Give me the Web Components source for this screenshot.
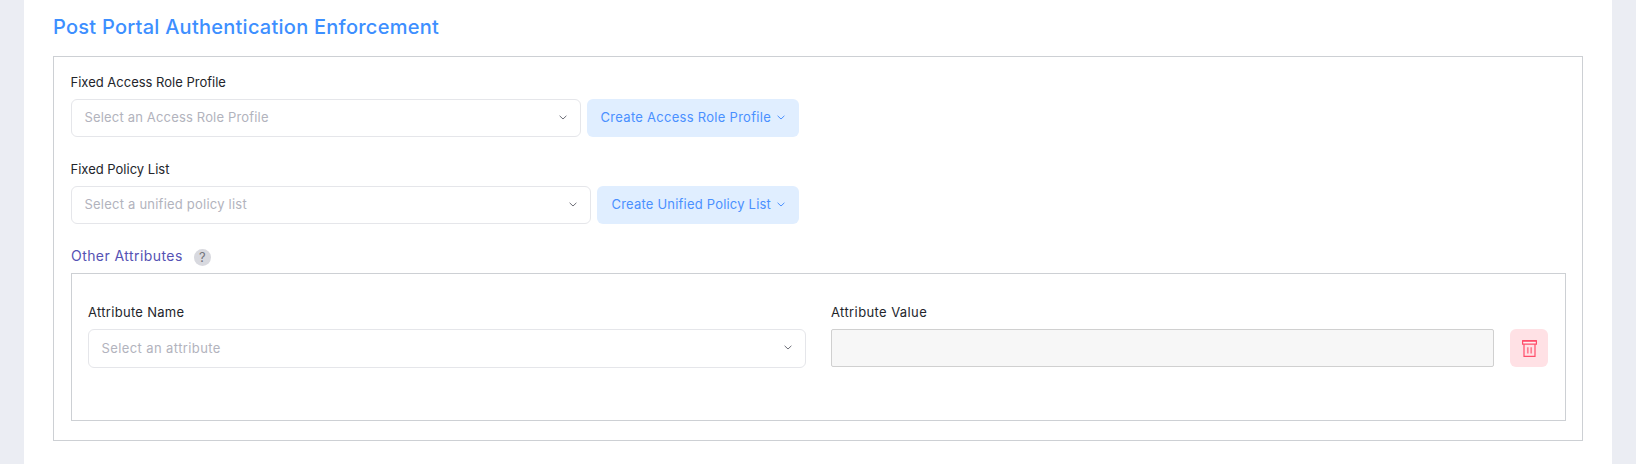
<!DOCTYPE html>
<html>
<head>
<meta charset="utf-8">
<title>Post Portal Authentication Enforcement</title>
<style>
  html, body { margin: 0; padding: 0; }
  body {
    height: 464px;
    overflow: hidden;
    background: #ebedf3;
    font-family: Inter, "Open Sans", sans-serif;
    font-size: 13px;
  }
</style>
</head>
<body>

<template id="chevron-tpl">
  <svg width="8" height="5" viewBox="0 0 8 5" fill="none"><path d="M.6.8 4 4 7.4.8" stroke="currentColor" stroke-width="1"/></svg>
</template>

<enforcement-card heading="Post Portal Authentication Enforcement">
  <select-group label="Fixed Access Role Profile" placeholder="Select an Access Role Profile" action="Create Access Role Profile" style="--ph-ls:.17px;--btn-ls:.28px;--btn-pad:13.5px"></select-group>
  <select-group label="Fixed Policy List" placeholder="Select a unified policy list" action="Create Unified Policy List" style="--ph-ls:.22px;--btn-ls:.2px;--btn-pad:14.5px"></select-group>
  <attributes-box heading="Other Attributes">
    <attribute-row></attribute-row>
  </attributes-box>
</enforcement-card>

<script>
const chevron = () => document.getElementById('chevron-tpl').innerHTML;

class EnforcementCard extends HTMLElement {
  constructor() {
    super();
    this.attachShadow({ mode: 'open' });
    this.shadowRoot.innerHTML = `
      <style>
        :host { display: block; margin: 0 24px; height: 464px; background: #fff; padding: 14px 29px 0; box-sizing: border-box; }
        h2 { margin: 0 0 15px 0; font-size: 20px; line-height: 27px; font-weight: 500; color: #3d8fff; letter-spacing: .25px; white-space: nowrap; }
        .box { border: 1px solid #cdd0d4; padding: 16px 16px 19px 17px; }
      </style>
      <h2>${this.getAttribute('heading')}</h2>
      <div class="box"><slot></slot></div>`;
  }
}

class SelectBox extends HTMLElement {
  constructor() {
    super();
    this.attachShadow({ mode: 'open' });
    this.shadowRoot.innerHTML = `
      <style>
        :host { display: flex; flex: 1; min-width: 0; height: 38px; box-sizing: border-box; align-items: center; justify-content: space-between;
          border: 1px solid #e5e6ea; border-radius: 6px; padding: 0 13px 2px 12.5px; background: #fff; color: #b2b3bd; font-size: 13px; letter-spacing: var(--ph-ls, 0); }
        .arrow { display: flex; color: #6d6f78; }
      </style>
      <span>${this.getAttribute('placeholder')}</span>
      <span class="arrow">${chevron()}</span>`;
  }
}

class SelectGroup extends HTMLElement {
  constructor() {
    super();
    this.attachShadow({ mode: 'open' });
    this.shadowRoot.innerHTML = `
      <style>
        :host { display: block; width: 728px; margin-bottom: 23px; }
        label { display: block; font-size: 13px; line-height: 19px; margin: 0 0 7px -.5px; color: #23252b; }
        .row { display: flex; gap: 6px; }
        button { all: unset; display: flex; align-items: center; gap: 6px; height: 38px; box-sizing: border-box; padding: 0 14px 2px var(--btn-pad, 13.5px); border-radius: 6px;
          background: #e0eeff; color: #4a90ff; font-size: 13px; letter-spacing: var(--btn-ls, .28px); font-family: inherit; white-space: nowrap; }
        svg { display: block; }
      </style>
      <label>${this.getAttribute('label')}</label>
      <div class="row">
        <select-box placeholder="${this.getAttribute('placeholder')}"></select-box>
        <button>${this.getAttribute('action')}${chevron()}</button>
      </div>`;
  }
}

class AttributesBox extends HTMLElement {
  constructor() {
    super();
    this.attachShadow({ mode: 'open' });
    this.shadowRoot.innerHTML = `
      <style>
        :host { display: block; }
        .head { display: flex; align-items: center; gap: 11px; height: 20px; margin: -1px 0 7px; color: #5552b4; font-size: 14px; letter-spacing: .43px; }
        .title { padding-bottom: 1px; }
        .help { width: 17px; height: 17px; border-radius: 50%; background: #d8d9df; color: #74757d; font-size: 13px; letter-spacing: 0; display: flex; align-items: center; justify-content: center; margin-top: 2px; }
        .inner { border: 1px solid #cdd0d4; padding: 29px 17px 52px 16px; }
      </style>
      <div class="head"><span class="title">${this.getAttribute('heading')}</span><span class="help">?</span></div>
      <div class="inner"><slot></slot></div>`;
  }
}

class AttributeRow extends HTMLElement {
  constructor() {
    super();
    this.attachShadow({ mode: 'open' });
    this.shadowRoot.innerHTML = `
      <style>
        :host { display: flex; align-items: flex-start; color: #23252b; }
        .field { display: flex; flex-direction: column; min-width: 0; }
        .name { flex: 0 0 718px; margin-right: 25px; --ph-ls: .4px; }
        .value { flex: 1; margin-right: 16px; }
        label { display: block; font-size: 13px; line-height: 19px; margin-bottom: 7px; }
        .name label { letter-spacing: .3px; }
        .value label { letter-spacing: .4px; }
        select-box { flex: none; height: 39px; }
        .input { height: 38px; box-sizing: border-box; background: #f7f7f7; border: 1px solid #d0d0d0; border-radius: 2px; }
        .trash { width: 38px; height: 38px; margin-top: 26px; flex: none; border-radius: 6px; background: #ffe1e5; display: flex; align-items: center; justify-content: center; }
      </style>
      <div class="field name">
        <label>Attribute Name</label>
        <select-box placeholder="Select an attribute"></select-box>
      </div>
      <div class="field value">
        <label>Attribute Value</label>
        <div class="input"></div>
      </div>
      <div class="trash">
        <svg width="15" height="17" viewBox="0 0 15 17" fill="none">
          <path d="M.6.8h13.8v3.4H.6z" stroke="#ff4d6a" stroke-width="1.2" fill="#ffeef0"/>
          <path d="M.4.8h14.2" stroke="#ff4d6a" stroke-width="1.6"/>
          <path d="M2 4.2v12.2h11V4.2" stroke="#ff4d6a" stroke-width="1.2"/>
          <path d="M5.8 7.2v6.4M9.2 7.2v6.4" stroke="#ff7d92" stroke-width="1.7"/>
        </svg>
      </div>`;
  }
}

customElements.define('enforcement-card', EnforcementCard);
customElements.define('select-box', SelectBox);
customElements.define('select-group', SelectGroup);
customElements.define('attributes-box', AttributesBox);
customElements.define('attribute-row', AttributeRow);
</script>
</body>
</html>
